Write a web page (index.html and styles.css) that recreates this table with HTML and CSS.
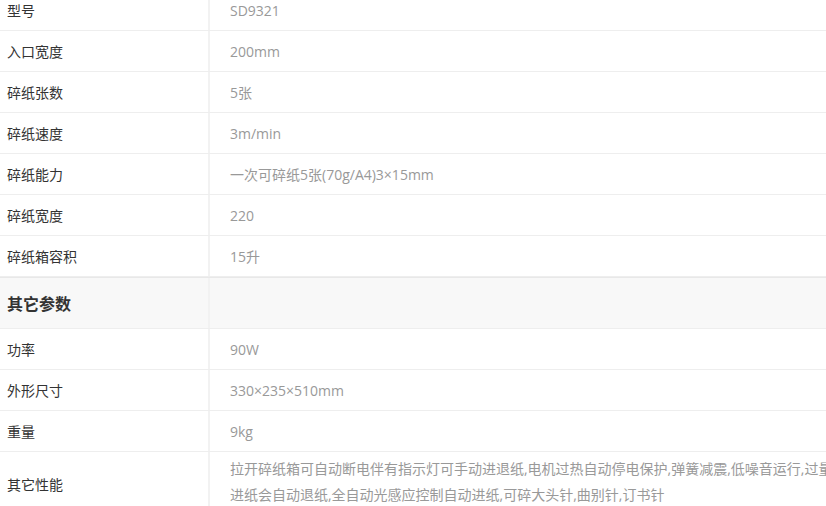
FILE: index.html
```html
<!DOCTYPE html>
<html lang="zh-CN">
<head>
    <meta charset="UTF-8">
    <meta name="viewport" content="width=device-width, initial-scale=1.0">
    <title>碎纸机参数</title>
    <link rel="stylesheet" href="styles.css">
</head>
<body>
    <div class="params">
        <div class="row"><div class="name">型号</div><div class="value">SD9321</div></div>
        <div class="row"><div class="name">入口宽度</div><div class="value">200mm</div></div>
        <div class="row"><div class="name">碎纸张数</div><div class="value">5张</div></div>
        <div class="row"><div class="name">碎纸速度</div><div class="value">3m/min</div></div>
        <div class="row"><div class="name">碎纸能力</div><div class="value">一次可碎纸5张(70g/A4)3×15mm</div></div>
        <div class="row"><div class="name">碎纸宽度</div><div class="value">220</div></div>
        <div class="row"><div class="name">碎纸箱容积</div><div class="value">15升</div></div>

        <div class="row group"><div class="name">其它参数</div><div class="value"></div></div>

        <div class="row"><div class="name">功率</div><div class="value">90W</div></div>
        <div class="row"><div class="name">外形尺寸</div><div class="value">330×235×510mm</div></div>
        <div class="row"><div class="name">重量</div><div class="value">9kg</div></div>
        <div class="row multi"><div class="name">其它性能</div><div class="value">拉开碎纸箱可自动断电伴有指示灯可手动进退纸,电机过热自动停电保护,弹簧减震,低噪音运行,过量进纸会自动退纸,全自动光感应控制自动进纸,可碎大头针,曲别针,订书针</div></div>
    </div>
</body>
</html>
```

FILE: styles.css
```css
body {
    margin: 0;
    overflow: hidden;
    background: #fff;
    font-family: 'Open Sans', 'Noto Sans CJK SC', sans-serif;
    font-size: 14px;
}

.params {
    width: 850px;
    margin-top: -10px;
}

.row {
    display: grid;
    grid-template-columns: 210px 1fr;
    min-height: 41px;
    box-sizing: border-box;
    border-bottom: 1px solid #eee;
}

.name {
    display: flex;
    align-items: center;
    padding-left: 7px;
    color: #333;
    border-right: 2px solid #f2f2f2;
}

.value {
    display: flex;
    align-items: center;
    padding: 0 10px 0 20px;
    color: #999;
}

.group {
    min-height: 52px;
    background: #f8f8f8;
    border-top: 1px solid #e8e8e8;
}

.group .name {
    font-size: 16px;
    font-weight: bold;
    color: #333;
}

.multi .value {
    line-height: 26px;
    padding-top: 4px;
    padding-bottom: 8px;
}
```
